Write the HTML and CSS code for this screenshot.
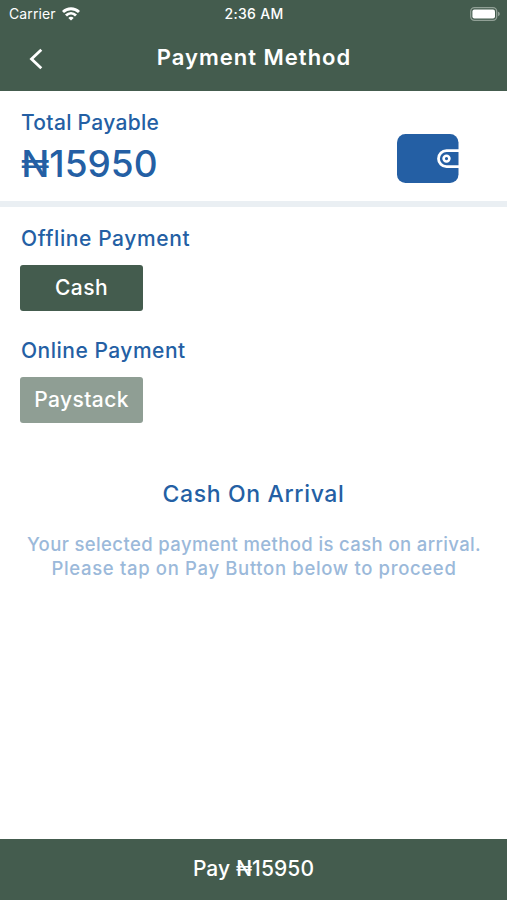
FILE: index.html
```html
<!DOCTYPE html>
<html lang="en">
<head>
    <meta charset="UTF-8">
    <meta name="viewport" content="width=device-width, initial-scale=1.0">
    <title>Payment Method</title>
    <link rel="stylesheet" href="styles.css">
</head>
<body>
    <div class="screen">
        <header class="header">
            <div class="status-bar">
                <div class="carrier">
                    <span class="carrier-name">Carrier</span>
                    <svg class="wifi" width="18" height="14" viewBox="0 0 18 14" fill="none" stroke="#fff" stroke-width="2.9">
                        <path d="M1 5C5.5 0.6 12.5 0.6 17 5"/>
                        <path d="M4 8.5C6.9 5.7 11.1 5.7 14 8.5"/>
                        <path d="M9 13.6L6.3 10.9C7.8 9.5 10.2 9.5 11.7 10.9Z" fill="#fff" stroke="none"/>
                    </svg>
                </div>
                <span class="time">2:36 AM</span>
                <svg class="battery" width="31" height="14" viewBox="0 0 31 14">
                    <rect x="0.7" y="0.7" width="26" height="12.6" rx="3.8" fill="none" stroke="#91a096" stroke-width="1.3"/>
                    <rect x="2.4" y="2.4" width="22.6" height="9.2" rx="2" fill="#fff"/>
                    <path d="M28 4.8C30.4 5.4 30.4 8.6 28 9.2Z" fill="#91a096"/>
                </svg>
            </div>
            <div class="nav">
                <button class="back-btn" aria-label="Back">
                    <svg width="14" height="22" viewBox="0 0 14 22" fill="none" stroke="#fff" stroke-width="2.8">
                        <path d="M12.3 1.7L2.5 11L12.3 20.3"/>
                    </svg>
                </button>
                <h1>Payment Method</h1>
            </div>
        </header>

        <section class="total">
            <div class="total-info">
                <h2 class="total-label">Total Payable</h2>
                <p class="amount">₦15950</p>
            </div>
            <svg class="wallet" width="62" height="49" viewBox="0 0 62 49">
                <rect width="61.5" height="49" rx="8.5" fill="#245fa4"/>
                <path d="M62 16.7H49.5A8 8 0 0 0 49.5 32.7H62" fill="none" stroke="#fff" stroke-width="2.8"/>
                <circle cx="49.5" cy="24.6" r="2.9" fill="none" stroke="#fff" stroke-width="2.6"/>
            </svg>
        </section>

        <main>
            <section class="method offline">
                <h2>Offline Payment</h2>
                <button class="btn">Cash</button>
            </section>
            <section class="method online">
                <h2>Online Payment</h2>
                <button class="btn btn-inactive">Paystack</button>
            </section>
            <section class="selected">
                <h3>Cash On Arrival</h3>
                <p class="line-1">Your selected payment method is cash on arrival.</p>
                <p class="line-2">Please tap on Pay Button below to proceed</p>
            </section>
        </main>

        <button class="pay-btn">Pay ₦15950</button>
    </div>
</body>
</html>
```

FILE: styles.css
```css
* {
    box-sizing: border-box;
}

body {
    margin: 0;
    font-family: Inter, "Liberation Sans", sans-serif;
    background-color: #fff;
    color: #245fa4;
}

h1, h2, h3, p {
    margin: 0;
    font-weight: 500;
    white-space: nowrap;
}

button {
    border: none;
    padding: 0;
    font-family: inherit;
    font-weight: 500;
    color: #fff;
    cursor: pointer;
}

.screen {
    display: flex;
    flex-direction: column;
    height: 900px;
}

/* Header */
.header {
    height: 91px;
    background-color: #445c4e;
    color: #fff;
}

.status-bar {
    display: grid;
    grid-template-columns: 1fr auto 1fr;
    align-items: center;
    height: 27px;
    padding: 0 6px 0 9px;
    font-size: 14px;
}

.carrier {
    display: flex;
    align-items: center;
    gap: 6px;
}

.carrier-name {
    letter-spacing: 0.1px;
}

.time {
    margin-right: 2px;
    font-weight: 500;
    letter-spacing: 0.3px;
}

.battery {
    justify-self: end;
}

.nav {
    display: grid;
    grid-template-columns: 72px 1fr 72px;
    align-items: center;
    height: 60px;
}

.back-btn {
    display: flex;
    padding: 4px 0 0 29px;
    background: none;
}

h1 {
    padding-left: 1px;
    font-size: 22px;
    line-height: 60px;
    font-weight: 600;
    letter-spacing: 1px;
    text-align: center;
}

/* Total */
.total {
    display: flex;
    justify-content: space-between;
    align-items: flex-start;
    height: 116px;
    padding: 16px 48px 0 21px;
    border-bottom: 6px solid #eaeff3;
}

.total-label {
    font-size: 21px;
    line-height: 31px;
    letter-spacing: 0.3px;
}

.amount {
    font-size: 37px;
    line-height: 52px;
    font-weight: 450;
    letter-spacing: 0;
}

.wallet {
    margin-top: 27px;
}

/* Payment methods */
main {
    flex: 1;
}

.method {
    padding-left: 20px;
}

.method h2 {
    padding-left: 1px;
    font-size: 21px;
    line-height: 30px;
    letter-spacing: 0.6px;
}

.offline {
    padding-top: 17px;
}

.online {
    padding-top: 25px;
}

.online h2 {
    letter-spacing: 0.5px;
}

.btn {
    display: block;
    width: 123px;
    height: 46px;
    margin-top: 11px;
    padding-bottom: 2px;
    border-radius: 3px;
    background-color: #445c4e;
    font-size: 21px;
    letter-spacing: 0.4px;
}

.btn-inactive {
    background-color: #8f9e94;
}

/* Selected method */
.selected {
    padding-top: 55px;
    text-align: center;
}

.selected h3 {
    margin-bottom: 22px;
    font-size: 23px;
    line-height: 32px;
    letter-spacing: 0.65px;
}

.selected p {
    padding-left: 1px;
    color: #9bb9da;
    font-size: 18.5px;
    line-height: 24px;
}

.line-1 {
    letter-spacing: 0.38px;
}

.line-2 {
    letter-spacing: 0.66px;
}

.pay-btn {
    height: 61px;
    padding-bottom: 2px;
    background-color: #445c4e;
    font-size: 21px;
    letter-spacing: 0.1px;
}
```
